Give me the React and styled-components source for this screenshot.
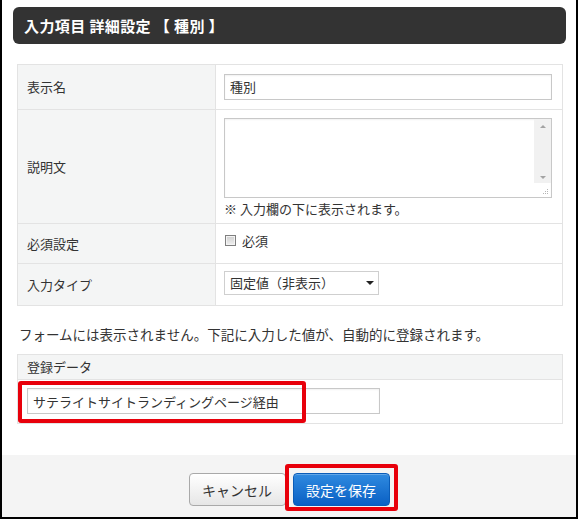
import React from 'react';
import styled, { createGlobalStyle } from 'styled-components';

const GlobalStyle = createGlobalStyle`
  html, body {
    margin: 0;
    padding: 0;
    background: #fff;
  }
  body {
    font-family: "Noto Sans CJK JP", "Noto Sans", sans-serif;
    color: #333;
    font-size: 13px;
  }
`;

const Frame = styled.div`
  position: relative;
  width: 574px;
  height: 517px;
  border-left: 2px solid #000;
  border-right: 2px solid #000;
  border-bottom: 2px solid #000;
  display: flex;
  flex-direction: column;
  background: #fff;
`;

const TitleBar = styled.h1`
  margin: 7px 10px 0 11px;
  height: 38px;
  box-sizing: border-box;
  padding: 0 0 0 11px;
  display: flex;
  align-items: center;
  background: #333;
  border-radius: 6px;
  color: #fff;
  font-size: 15px;
  font-weight: 700;
  letter-spacing: 0.4px;
`;

const Body = styled.div`
  flex: 1;
  padding: 20px 13px 0 15px;
  display: flex;
  flex-direction: column;
`;

const Table = styled.div`
  width: 546px;
  box-sizing: border-box;
  border: 1px solid #e3e3e3;
  display: flex;
  flex-direction: column;
`;

const Row = styled.div`
  display: flex;
  height: ${({ $h }) => $h}px;
  box-sizing: border-box;
  border-top: ${({ $first }) => ($first ? 'none' : '1px solid #e3e3e3')};
`;

const Label = styled.div`
  width: 198px;
  flex-shrink: 0;
  box-sizing: border-box;
  background: #f4f5f5;
  border-right: 1px solid #e3e3e3;
  padding-left: 9px;
  display: flex;
  align-items: center;
  font-size: 13px;
  color: #333;
`;

const Cell = styled.div`
  flex: 1;
  box-sizing: border-box;
  padding: ${({ $pad }) => $pad || '0 9px 0 8px'};
  display: flex;
  flex-direction: column;
  justify-content: ${({ $top }) => ($top ? 'flex-start' : 'center')};
`;

const TextInput = styled.div`
  width: ${({ $w }) => $w || '328px'};
  height: 26px;
  box-sizing: border-box;
  border: 1px solid #c8c8c8;
  box-shadow: inset 0 1px 2px rgba(0, 0, 0, 0.06);
  background: #fff;
  padding-left: 5px;
  display: flex;
  align-items: center;
  font-size: 13px;
  color: #333;
`;

const TextArea = styled.div`
  position: relative;
  width: 328px;
  height: 80px;
  box-sizing: border-box;
  border: 1px solid #c8c8c8;
  box-shadow: inset 0 1px 2px rgba(0, 0, 0, 0.06);
  background: #fff;
`;

const ScrollBar = styled.div`
  position: absolute;
  top: 0;
  right: 0;
  width: 17px;
  height: 64px;
  background: #f1f1f1;
  display: flex;
  flex-direction: column;
  justify-content: space-between;
  align-items: center;
  padding: 6px 0 4px;
  box-sizing: border-box;
`;

const Arrow = styled.span`
  width: 0;
  height: 0;
  border-left: 3px solid transparent;
  border-right: 3px solid transparent;
  ${({ $up }) => ($up ? 'border-bottom: 3px solid #a3a3a3;' : 'border-top: 3px solid #a3a3a3;')}
`;

const Grip = styled.svg`
  position: absolute;
  right: 2px;
  bottom: 2px;
`;

const Hint = styled.div`
  margin-top: 1px;
  font-size: 13px;
  color: #333;
`;

const CheckLabel = styled.label`
  display: flex;
  align-items: center;
  gap: 6px;
  font-size: 13px;
  margin-top: -6px;
`;

const CheckBox = styled.span`
  width: 11px;
  height: 11px;
  box-sizing: border-box;
  border: 1px solid #7f7f7f;
  background: linear-gradient(#cfcfcf, #f0f0f0);
  box-shadow: inset 0 0 0 1px #f4f4f4;
  margin-left: 1px;
`;

const Select = styled.div`
  width: 155px;
  height: 24px;
  box-sizing: border-box;
  border: 1px solid #cfcfcf;
  background: #fff;
  padding: 0 4px 0 5px;
  display: flex;
  align-items: center;
  justify-content: space-between;
  font-size: 13px;
  margin-top: -3px;
`;

const Caret = styled.span`
  width: 0;
  height: 0;
  border-left: 4px solid transparent;
  border-right: 4px solid transparent;
  border-top: 4px solid #222;
`;

const Notice = styled.p`
  margin: 18px 0 10px 2px;
  font-size: 13.5px;
  color: #333;
`;

const HeadRow = styled.div`
  height: 24px;
  background: #f4f5f5;
  border-bottom: 1px solid #e3e3e3;
  padding-left: 9px;
  display: flex;
  align-items: center;
  font-size: 13px;
`;

const DataRow = styled.div`
  position: relative;
  height: 43px;
  padding-left: 9px;
  display: flex;
  align-items: center;
`;

const Highlight = styled.span`
  position: absolute;
  border: 4px solid #e8000b;
  border-radius: 3px;
  box-sizing: border-box;
  pointer-events: none;
`;

const Footer = styled.div`
  margin-top: 31px;
  height: 64px;
  background: #f4f4f4;
  display: flex;
  justify-content: center;
  align-items: center;
  gap: 7px;
  padding-top: 8px;
  box-sizing: border-box;
`;

const ButtonWrap = styled.div`
  position: relative;
  display: flex;
`;

const Button = styled.button`
  width: ${({ $w }) => $w}px;
  height: 33px;
  box-sizing: border-box;
  border-radius: 4px;
  font-family: "Noto Sans CJK JP", "Noto Sans", sans-serif;
  font-size: 14px;
  cursor: pointer;
  border: 1px solid ${({ $primary }) => ($primary ? '#0a5cb8' : '#a9a9a9')};
  color: ${({ $primary }) => ($primary ? '#fff' : '#333')};
  background: ${({ $primary }) =>
    $primary
      ? 'linear-gradient(#2f8ae0, #0a60c4)'
      : 'linear-gradient(#ffffff, #e6e6e6)'};
  box-shadow: ${({ $primary }) =>
    $primary ? 'inset 0 1px 0 rgba(255,255,255,0.25)' : 'inset 0 1px 0 #fff'};
`;

export default function App() {
  return (
    <>
      <GlobalStyle />
      <Frame>
        <TitleBar>入力項目 詳細設定 【 種別 】</TitleBar>
        <Body>
          <Table>
            <Row $h={44} $first>
              <Label>表示名</Label>
              <Cell>
                <TextInput>種別</TextInput>
              </Cell>
            </Row>
            <Row $h={114}>
              <Label>説明文</Label>
              <Cell $top $pad="8px 9px 0 8px">
                <TextArea>
                  <ScrollBar>
                    <Arrow $up />
                    <Arrow />
                  </ScrollBar>
                  <Grip width="7" height="7" viewBox="0 0 7 7">
                    <g fill="#b5b5b5">
                      <rect x="5" y="1" width="1" height="1" />
                      <rect x="3" y="3" width="1" height="1" />
                      <rect x="5" y="3" width="1" height="1" />
                      <rect x="1" y="5" width="1" height="1" />
                      <rect x="3" y="5" width="1" height="1" />
                      <rect x="5" y="5" width="1" height="1" />
                    </g>
                  </Grip>
                </TextArea>
                <Hint>※ 入力欄の下に表示されます。</Hint>
              </Cell>
            </Row>
            <Row $h={40}>
              <Label>必須設定</Label>
              <Cell>
                <CheckLabel>
                  <CheckBox />
                  必須
                </CheckLabel>
              </Cell>
            </Row>
            <Row $h={42}>
              <Label>入力タイプ</Label>
              <Cell>
                <Select>
                  固定値（非表示）
                  <Caret />
                </Select>
              </Cell>
            </Row>
          </Table>

          <Notice>フォームには表示されません。下記に入力した値が、自動的に登録されます。</Notice>

          <Table>
            <HeadRow>登録データ</HeadRow>
            <DataRow>
              <TextInput $w="353px">サテライトサイトランディングページ経由</TextInput>
              <Highlight style={{ left: 0, top: 1, width: 288, height: 42 }} />
            </DataRow>
          </Table>
        </Body>
        <Footer>
          <Button $w={97}>キャンセル</Button>
          <ButtonWrap>
            <Button $w={97} $primary>設定を保存</Button>
            <Highlight style={{ left: -8, top: -9, width: 113, height: 47 }} />
          </ButtonWrap>
        </Footer>
      </Frame>
    </>
  );
}
